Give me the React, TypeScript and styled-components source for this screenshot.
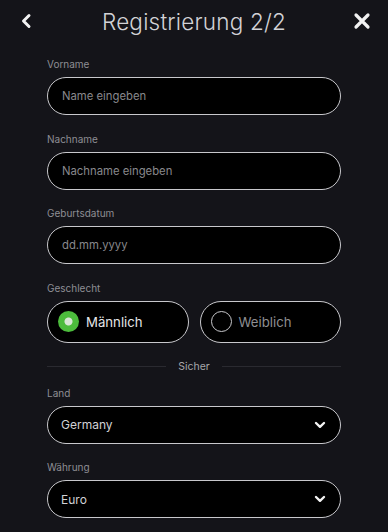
import styled, { createGlobalStyle } from 'styled-components';

const GlobalStyle = createGlobalStyle`
  html, body {
    margin: 0;
    padding: 0;
    background: #141419;
  }
  body {
    font-family: Inter, "Noto Sans", sans-serif;
    color: #d4d4d8;
  }
`;

const fields = [
  { label: 'Vorname', placeholder: 'Name eingeben' },
  { label: 'Nachname', placeholder: 'Nachname eingeben' },
  { label: 'Geburtsdatum', placeholder: 'dd.mm.yyyy' },
];

const selects = [
  { label: 'Land', value: 'Germany' },
  { label: 'Währung', value: 'Euro' },
];

const App = () => {
  return (
    <>
      <GlobalStyle />
      <Page>
        <Header>
          <IconButton aria-label="Zurück">
            <svg width="12" height="16" viewBox="0 0 12 16">
              <polyline
                points="9,2.5 3.5,8 9,13.5"
                fill="none"
                stroke="#f2f2f2"
                strokeWidth="3"
                strokeLinecap="round"
                strokeLinejoin="round"
              />
            </svg>
          </IconButton>
          <Title>Registrierung 2/2</Title>
          <IconButton aria-label="Schließen">
            <svg width="18" height="18" viewBox="0 0 18 18">
              <path
                d="M3 3 L15 15 M15 3 L3 15"
                fill="none"
                stroke="#f2f2f2"
                strokeWidth="3.2"
                strokeLinecap="round"
              />
            </svg>
          </IconButton>
        </Header>

        <Form>
          {fields.map((f) => (
            <Field key={f.label}>
              <Label>{f.label}</Label>
              <Input placeholder={f.placeholder} />
            </Field>
          ))}

          <Field>
            <Label>Geschlecht</Label>
            <RadioRow>
              <RadioPill>
                <RadioDot $checked />
                <RadioText $checked>Männlich</RadioText>
              </RadioPill>
              <RadioPill>
                <RadioDot />
                <RadioText>Weiblich</RadioText>
              </RadioPill>
            </RadioRow>
          </Field>

          <Divider>
            <span>Sicher</span>
          </Divider>

          {selects.map((s) => (
            <Field key={s.label}>
              <Label>{s.label}</Label>
              <Select>
                <SelectValue>{s.value}</SelectValue>
                <svg width="12" height="8" viewBox="0 0 12 8">
                  <polyline
                    points="2,2 6,5.8 10,2"
                    fill="none"
                    stroke="#f4f4f4"
                    strokeWidth="2.4"
                    strokeLinecap="round"
                    strokeLinejoin="round"
                  />
                </svg>
              </Select>
            </Field>
          ))}
        </Form>
      </Page>
    </>
  );
};

export default App;

const Page = styled.div`
  width: 388px;
  min-height: 532px;
  background: #141419;
`;

const Header = styled.div`
  display: flex;
  align-items: center;
  justify-content: space-between;
  height: 42px;
  padding: 0 14px 0 14px;
`;

const IconButton = styled.button`
  display: flex;
  align-items: center;
  justify-content: center;
  width: 24px;
  height: 24px;
  padding: 0;
  border: none;
  background: none;
`;

const Title = styled.h1`
  margin: 0;
  font-size: 22.5px;
  font-weight: 300;
  color: #d2d2d6;
  letter-spacing: 0.2px;
`;

const Form = styled.div`
  display: flex;
  flex-direction: column;
  padding: 16px 47px 0;
`;

const Field = styled.div`
  display: flex;
  flex-direction: column;
  margin-bottom: 17.5px;
`;

const Label = styled.div`
  font-size: 10px;
  line-height: 13px;
  color: #8e8e94;
  margin-bottom: 6px;
`;

const Input = styled.input`
  box-sizing: border-box;
  height: 38px;
  width: 100%;
  padding: 0 14px;
  border: 1.5px solid #c8c8cc;
  border-radius: 19px;
  background: #000;
  color: #e0e0e0;
  font-family: Inter, "Noto Sans", sans-serif;
  font-size: 11.3px;
  outline: none;

  &::placeholder {
    color: #88888c;
  }
`;

const RadioRow = styled.div`
  display: grid;
  grid-template-columns: 1fr 1fr;
  gap: 11px;
`;

const RadioPill = styled.div`
  box-sizing: border-box;
  display: flex;
  align-items: center;
  gap: 7px;
  height: 42px;
  padding: 0 10px;
  border: 1.5px solid #c8c8cc;
  border-radius: 21px;
  background: #000;
`;

const RadioDot = styled.span<{ $checked?: boolean }>`
  box-sizing: border-box;
  width: 21px;
  height: 21px;
  border-radius: 50%;
  flex-shrink: 0;
  ${(p) =>
    p.$checked
      ? `
    background: radial-gradient(circle, #d9e6d6 0 3.5px, #4cbc3c 4.5px);
  `
      : `
    border: 1.5px solid #c8c8cc;
  `}
`;

const RadioText = styled.span<{ $checked?: boolean }>`
  font-size: 13.2px;
  color: ${(p) => (p.$checked ? '#e6e6e8' : '#8e8e92')};
`;

const Divider = styled.div`
  display: flex;
  align-items: center;
  gap: 12px;
  height: 13px;
  margin-bottom: 13.5px;
  font-size: 10.5px;
  color: #a6a6aa;

  &::before,
  &::after {
    content: '';
    flex: 1;
    height: 1px;
    background: #2a2a30;
  }
`;

const Select = styled.div`
  box-sizing: border-box;
  display: flex;
  align-items: center;
  justify-content: space-between;
  height: 38px;
  padding: 0 14px 0 13px;
  border: 1.5px solid #c8c8cc;
  border-radius: 19px;
  background: #000;
`;

const SelectValue = styled.span`
  font-size: 12px;
  color: #d2d2d6;
`;
